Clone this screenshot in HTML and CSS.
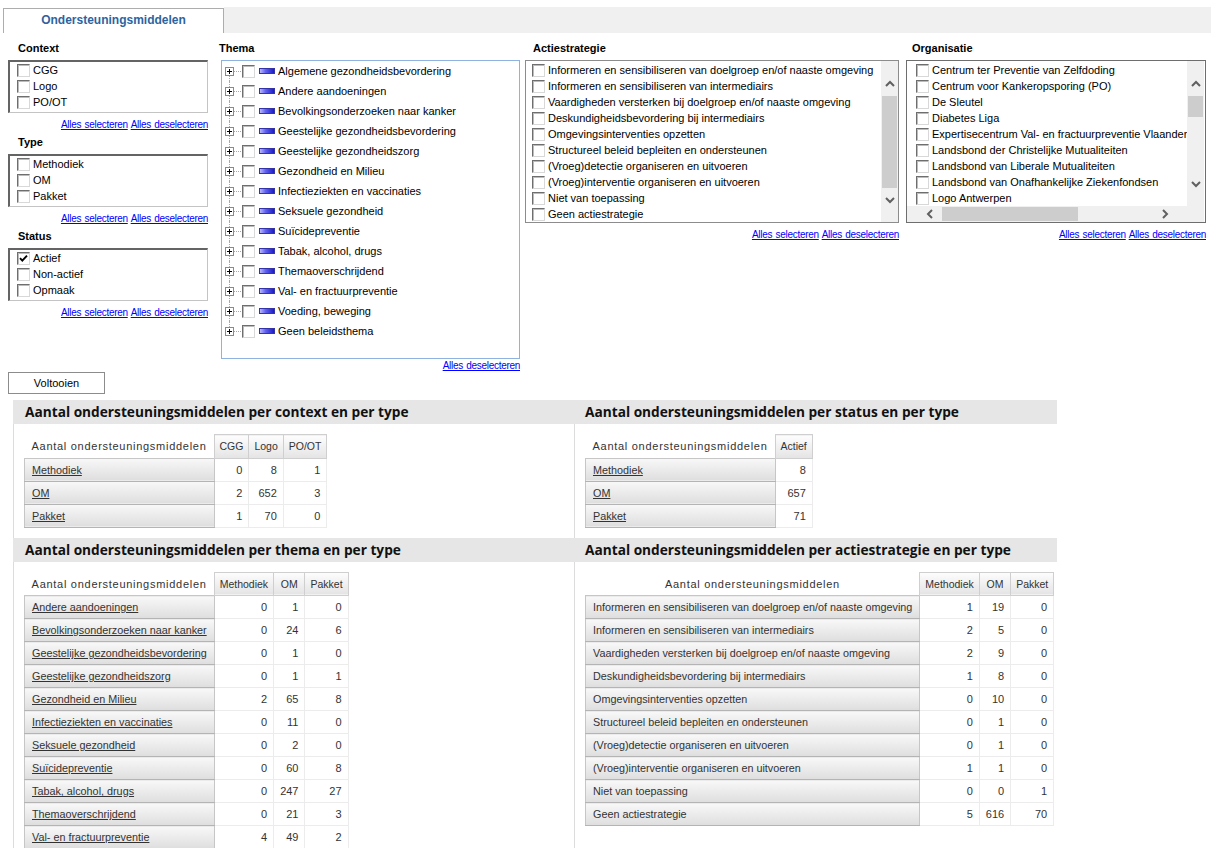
FILE: index.html
```html
<!DOCTYPE html>
<html lang="nl">
<head>
<meta charset="utf-8">
<title>Ondersteuningsmiddelen</title>
<link rel="stylesheet" href="styles.css">
</head>
<body>
<div class="tabbar">
  <div class="tab">Ondersteuningsmiddelen</div>
  <div class="tabfill"></div>
</div>

<div class="filters">
  <div class="col col-ctx">
    <div class="group">
      <div class="flabel">Context</div>
      <div class="lbox">
        <div class="opt"><span class="cb"></span>CGG</div>
        <div class="opt"><span class="cb"></span>Logo</div>
        <div class="opt"><span class="cb"></span>PO/OT</div>
      </div>
      <div class="links"><a href="#">Alles selecteren</a> <a href="#">Alles deselecteren</a></div>
    </div>
    <div class="group">
      <div class="flabel">Type</div>
      <div class="lbox">
        <div class="opt"><span class="cb"></span>Methodiek</div>
        <div class="opt"><span class="cb"></span>OM</div>
        <div class="opt"><span class="cb"></span>Pakket</div>
      </div>
      <div class="links"><a href="#">Alles selecteren</a> <a href="#">Alles deselecteren</a></div>
    </div>
    <div class="group">
      <div class="flabel">Status</div>
      <div class="lbox">
        <div class="opt"><span class="cb"><svg width="11" height="11" viewBox="0 0 11 11"><path d="M2 5.2 L4.3 7.6 L9 2.6" fill="none" stroke="#000" stroke-width="1.9"/></svg></span>Actief</div>
        <div class="opt"><span class="cb"></span>Non-actief</div>
        <div class="opt"><span class="cb"></span>Opmaak</div>
      </div>
      <div class="links"><a href="#">Alles selecteren</a> <a href="#">Alles deselecteren</a></div>
    </div>
  </div>

  <div class="col col-thema">
    <div class="flabel">Thema</div>
    <div class="tbox">
      <div class="trow"><span class="exp"><svg width="9" height="9" viewBox="0 0 9 9"><rect x="0.5" y="0.5" width="8" height="8" fill="#fff" stroke="#8a8a8a"/><path d="M2 4.5h5M4.5 2v5" stroke="#000"/></svg></span><span class="hline"></span><span class="cb"></span><span class="ticon"></span><span class="ttext">Algemene gezondheidsbevordering</span></div>
      <div class="trow"><span class="exp"><svg width="9" height="9" viewBox="0 0 9 9"><rect x="0.5" y="0.5" width="8" height="8" fill="#fff" stroke="#8a8a8a"/><path d="M2 4.5h5M4.5 2v5" stroke="#000"/></svg></span><span class="hline"></span><span class="cb"></span><span class="ticon"></span><span class="ttext">Andere aandoeningen</span></div>
      <div class="trow"><span class="exp"><svg width="9" height="9" viewBox="0 0 9 9"><rect x="0.5" y="0.5" width="8" height="8" fill="#fff" stroke="#8a8a8a"/><path d="M2 4.5h5M4.5 2v5" stroke="#000"/></svg></span><span class="hline"></span><span class="cb"></span><span class="ticon"></span><span class="ttext">Bevolkingsonderzoeken naar kanker</span></div>
      <div class="trow"><span class="exp"><svg width="9" height="9" viewBox="0 0 9 9"><rect x="0.5" y="0.5" width="8" height="8" fill="#fff" stroke="#8a8a8a"/><path d="M2 4.5h5M4.5 2v5" stroke="#000"/></svg></span><span class="hline"></span><span class="cb"></span><span class="ticon"></span><span class="ttext">Geestelijke gezondheidsbevordering</span></div>
      <div class="trow"><span class="exp"><svg width="9" height="9" viewBox="0 0 9 9"><rect x="0.5" y="0.5" width="8" height="8" fill="#fff" stroke="#8a8a8a"/><path d="M2 4.5h5M4.5 2v5" stroke="#000"/></svg></span><span class="hline"></span><span class="cb"></span><span class="ticon"></span><span class="ttext">Geestelijke gezondheidszorg</span></div>
      <div class="trow"><span class="exp"><svg width="9" height="9" viewBox="0 0 9 9"><rect x="0.5" y="0.5" width="8" height="8" fill="#fff" stroke="#8a8a8a"/><path d="M2 4.5h5M4.5 2v5" stroke="#000"/></svg></span><span class="hline"></span><span class="cb"></span><span class="ticon"></span><span class="ttext">Gezondheid en Milieu</span></div>
      <div class="trow"><span class="exp"><svg width="9" height="9" viewBox="0 0 9 9"><rect x="0.5" y="0.5" width="8" height="8" fill="#fff" stroke="#8a8a8a"/><path d="M2 4.5h5M4.5 2v5" stroke="#000"/></svg></span><span class="hline"></span><span class="cb"></span><span class="ticon"></span><span class="ttext">Infectieziekten en vaccinaties</span></div>
      <div class="trow"><span class="exp"><svg width="9" height="9" viewBox="0 0 9 9"><rect x="0.5" y="0.5" width="8" height="8" fill="#fff" stroke="#8a8a8a"/><path d="M2 4.5h5M4.5 2v5" stroke="#000"/></svg></span><span class="hline"></span><span class="cb"></span><span class="ticon"></span><span class="ttext">Seksuele gezondheid</span></div>
      <div class="trow"><span class="exp"><svg width="9" height="9" viewBox="0 0 9 9"><rect x="0.5" y="0.5" width="8" height="8" fill="#fff" stroke="#8a8a8a"/><path d="M2 4.5h5M4.5 2v5" stroke="#000"/></svg></span><span class="hline"></span><span class="cb"></span><span class="ticon"></span><span class="ttext">Suïcidepreventie</span></div>
      <div class="trow"><span class="exp"><svg width="9" height="9" viewBox="0 0 9 9"><rect x="0.5" y="0.5" width="8" height="8" fill="#fff" stroke="#8a8a8a"/><path d="M2 4.5h5M4.5 2v5" stroke="#000"/></svg></span><span class="hline"></span><span class="cb"></span><span class="ticon"></span><span class="ttext">Tabak, alcohol, drugs</span></div>
      <div class="trow"><span class="exp"><svg width="9" height="9" viewBox="0 0 9 9"><rect x="0.5" y="0.5" width="8" height="8" fill="#fff" stroke="#8a8a8a"/><path d="M2 4.5h5M4.5 2v5" stroke="#000"/></svg></span><span class="hline"></span><span class="cb"></span><span class="ticon"></span><span class="ttext">Themaoverschrijdend</span></div>
      <div class="trow"><span class="exp"><svg width="9" height="9" viewBox="0 0 9 9"><rect x="0.5" y="0.5" width="8" height="8" fill="#fff" stroke="#8a8a8a"/><path d="M2 4.5h5M4.5 2v5" stroke="#000"/></svg></span><span class="hline"></span><span class="cb"></span><span class="ticon"></span><span class="ttext">Val- en fractuurpreventie</span></div>
      <div class="trow"><span class="exp"><svg width="9" height="9" viewBox="0 0 9 9"><rect x="0.5" y="0.5" width="8" height="8" fill="#fff" stroke="#8a8a8a"/><path d="M2 4.5h5M4.5 2v5" stroke="#000"/></svg></span><span class="hline"></span><span class="cb"></span><span class="ticon"></span><span class="ttext">Voeding, beweging</span></div>
      <div class="trow"><span class="exp"><svg width="9" height="9" viewBox="0 0 9 9"><rect x="0.5" y="0.5" width="8" height="8" fill="#fff" stroke="#8a8a8a"/><path d="M2 4.5h5M4.5 2v5" stroke="#000"/></svg></span><span class="hline"></span><span class="cb"></span><span class="ticon"></span><span class="ttext">Geen beleidsthema</span></div>
    </div>
    <div class="links links-thema"><a href="#">Alles deselecteren</a></div>
  </div>

  <div class="col col-acti">
    <div class="flabel">Actiestrategie</div>
    <div class="sbox abox">
      <div class="slist">
        <div class="opt"><span class="cb"></span>Informeren en sensibiliseren van doelgroep en/of naaste omgeving</div>
        <div class="opt"><span class="cb"></span>Informeren en sensibiliseren van intermediairs</div>
        <div class="opt"><span class="cb"></span>Vaardigheden versterken bij doelgroep en/of naaste omgeving</div>
        <div class="opt"><span class="cb"></span>Deskundigheidsbevordering bij intermediairs</div>
        <div class="opt"><span class="cb"></span>Omgevingsinterventies opzetten</div>
        <div class="opt"><span class="cb"></span>Structureel beleid bepleiten en ondersteunen</div>
        <div class="opt"><span class="cb"></span>(Vroeg)detectie organiseren en uitvoeren</div>
        <div class="opt"><span class="cb"></span>(Vroeg)interventie organiseren en uitvoeren</div>
        <div class="opt"><span class="cb"></span>Niet van toepassing</div>
        <div class="opt"><span class="cb"></span>Geen actiestrategie</div>
      </div>
      <div class="vscroll">
        <div class="sbtn sbtn-up"><svg width="10" height="7" viewBox="0 0 10 7"><path d="M1 6 L5 2 L9 6" fill="none" stroke="#606060" stroke-width="2"/></svg></div>
        <div class="vthumb vthumb-acti"></div>
        <div class="sbtn sbtn-down"><svg width="10" height="7" viewBox="0 0 10 7"><path d="M1 1 L5 5 L9 1" fill="none" stroke="#606060" stroke-width="2"/></svg></div>
      </div>
    </div>
    <div class="links links-box"><a href="#">Alles selecteren</a> <a href="#">Alles deselecteren</a></div>
  </div>

  <div class="col col-org">
    <div class="flabel">Organisatie</div>
    <div class="obox">
      <div class="slist olist">
        <div class="opt"><span class="cb"></span>Centrum ter Preventie van Zelfdoding</div>
        <div class="opt"><span class="cb"></span>Centrum voor Kankeropsporing (PO)</div>
        <div class="opt"><span class="cb"></span>De Sleutel</div>
        <div class="opt"><span class="cb"></span>Diabetes Liga</div>
        <div class="opt"><span class="cb"></span>Expertisecentrum Val- en fractuurpreventie Vlaanderen</div>
        <div class="opt"><span class="cb"></span>Landsbond der Christelijke Mutualiteiten</div>
        <div class="opt"><span class="cb"></span>Landsbond van Liberale Mutualiteiten</div>
        <div class="opt"><span class="cb"></span>Landsbond van Onafhankelijke Ziekenfondsen</div>
        <div class="opt"><span class="cb"></span>Logo Antwerpen</div>
      </div>
      <div class="vscroll">
        <div class="sbtn sbtn-up"><svg width="10" height="7" viewBox="0 0 10 7"><path d="M1 6 L5 2 L9 6" fill="none" stroke="#606060" stroke-width="2"/></svg></div>
        <div class="vthumb vthumb-org"></div>
        <div class="vtrack"></div>
        <div class="sbtn sbtn-down"><svg width="10" height="7" viewBox="0 0 10 7"><path d="M1 1 L5 5 L9 1" fill="none" stroke="#606060" stroke-width="2"/></svg></div>
      </div>
      <div class="hscroll">
        <div class="hbtn hbtn-left"><svg width="7" height="10" viewBox="0 0 7 10"><path d="M6 1 L2 5 L6 9" fill="none" stroke="#606060" stroke-width="2"/></svg></div>
        <div class="hthumb"></div>
        <div class="htrack"></div>
        <div class="hbtn hbtn-right"><svg width="7" height="10" viewBox="0 0 7 10"><path d="M1 1 L5 5 L1 9" fill="none" stroke="#606060" stroke-width="2"/></svg></div>
      </div>
      <div class="corner"></div>
    </div>
    <div class="links links-box"><a href="#">Alles selecteren</a> <a href="#">Alles deselecteren</a></div>
  </div>
</div>

<button class="btn" type="button">Voltooien</button>

<div class="report">
  <section class="panel">
    <h2 class="panel-head">Aantal ondersteuningsmiddelen per context en per type</h2>
    <div class="panel-body">
      <table class="rtable">
        <tr><th class="corner">Aantal ondersteuningsmiddelen</th><th class="colh">CGG</th><th class="colh">Logo</th><th class="colh">PO/OT</th></tr>
        <tr><td class="lbl"><a href="#">Methodiek</a></td><td class="num">0</td><td class="num">8</td><td class="num">1</td></tr>
        <tr><td class="lbl"><a href="#">OM</a></td><td class="num">2</td><td class="num">652</td><td class="num">3</td></tr>
        <tr><td class="lbl"><a href="#">Pakket</a></td><td class="num">1</td><td class="num">70</td><td class="num">0</td></tr>
      </table>
    </div>
  </section>
  <section class="panel panel-right">
    <h2 class="panel-head">Aantal ondersteuningsmiddelen per status en per type</h2>
    <div class="panel-body">
      <table class="rtable">
        <tr><th class="corner">Aantal ondersteuningsmiddelen</th><th class="colh">Actief</th></tr>
        <tr><td class="lbl"><a href="#">Methodiek</a></td><td class="num">8</td></tr>
        <tr><td class="lbl"><a href="#">OM</a></td><td class="num">657</td></tr>
        <tr><td class="lbl"><a href="#">Pakket</a></td><td class="num">71</td></tr>
      </table>
    </div>
  </section>
  <section class="panel">
    <h2 class="panel-head">Aantal ondersteuningsmiddelen per thema en per type</h2>
    <div class="panel-body">
      <table class="rtable">
        <tr><th class="corner">Aantal ondersteuningsmiddelen</th><th class="colh">Methodiek</th><th class="colh">OM</th><th class="colh">Pakket</th></tr>
        <tr><td class="lbl"><a href="#">Andere aandoeningen</a></td><td class="num">0</td><td class="num">1</td><td class="num">0</td></tr>
        <tr><td class="lbl"><a href="#">Bevolkingsonderzoeken naar kanker</a></td><td class="num">0</td><td class="num">24</td><td class="num">6</td></tr>
        <tr><td class="lbl"><a href="#">Geestelijke gezondheidsbevordering</a></td><td class="num">0</td><td class="num">1</td><td class="num">0</td></tr>
        <tr><td class="lbl"><a href="#">Geestelijke gezondheidszorg</a></td><td class="num">0</td><td class="num">1</td><td class="num">1</td></tr>
        <tr><td class="lbl"><a href="#">Gezondheid en Milieu</a></td><td class="num">2</td><td class="num">65</td><td class="num">8</td></tr>
        <tr><td class="lbl"><a href="#">Infectieziekten en vaccinaties</a></td><td class="num">0</td><td class="num">11</td><td class="num">0</td></tr>
        <tr><td class="lbl"><a href="#">Seksuele gezondheid</a></td><td class="num">0</td><td class="num">2</td><td class="num">0</td></tr>
        <tr><td class="lbl"><a href="#">Suïcidepreventie</a></td><td class="num">0</td><td class="num">60</td><td class="num">8</td></tr>
        <tr><td class="lbl"><a href="#">Tabak, alcohol, drugs</a></td><td class="num">0</td><td class="num">247</td><td class="num">27</td></tr>
        <tr><td class="lbl"><a href="#">Themaoverschrijdend</a></td><td class="num">0</td><td class="num">21</td><td class="num">3</td></tr>
        <tr><td class="lbl"><a href="#">Val- en fractuurpreventie</a></td><td class="num">4</td><td class="num">49</td><td class="num">2</td></tr>
      </table>
    </div>
  </section>
  <section class="panel panel-right">
    <h2 class="panel-head">Aantal ondersteuningsmiddelen per actiestrategie en per type</h2>
    <div class="panel-body">
      <table class="rtable">
        <tr><th class="corner">Aantal ondersteuningsmiddelen</th><th class="colh">Methodiek</th><th class="colh">OM</th><th class="colh">Pakket</th></tr>
        <tr><td class="lbl">Informeren en sensibiliseren van doelgroep en/of naaste omgeving</td><td class="num">1</td><td class="num">19</td><td class="num">0</td></tr>
        <tr><td class="lbl">Informeren en sensibiliseren van intermediairs</td><td class="num">2</td><td class="num">5</td><td class="num">0</td></tr>
        <tr><td class="lbl">Vaardigheden versterken bij doelgroep en/of naaste omgeving</td><td class="num">2</td><td class="num">9</td><td class="num">0</td></tr>
        <tr><td class="lbl">Deskundigheidsbevordering bij intermediairs</td><td class="num">1</td><td class="num">8</td><td class="num">0</td></tr>
        <tr><td class="lbl">Omgevingsinterventies opzetten</td><td class="num">0</td><td class="num">10</td><td class="num">0</td></tr>
        <tr><td class="lbl">Structureel beleid bepleiten en ondersteunen</td><td class="num">0</td><td class="num">1</td><td class="num">0</td></tr>
        <tr><td class="lbl">(Vroeg)detectie organiseren en uitvoeren</td><td class="num">0</td><td class="num">1</td><td class="num">0</td></tr>
        <tr><td class="lbl">(Vroeg)interventie organiseren en uitvoeren</td><td class="num">1</td><td class="num">1</td><td class="num">0</td></tr>
        <tr><td class="lbl">Niet van toepassing</td><td class="num">0</td><td class="num">0</td><td class="num">1</td></tr>
        <tr><td class="lbl">Geen actiestrategie</td><td class="num">5</td><td class="num">616</td><td class="num">70</td></tr>
      </table>
    </div>
  </section>
</div>
</body>
</html>
```

FILE: styles.css
```css
html { overflow: hidden; }
body {
  margin: 0;
  background: #fff;
  font-family: "Liberation Sans", Arial, sans-serif;
  font-size: 11px;
  color: #000;
}

/* tab strip */
.tabbar {
  display: flex;
  height: 26px;
  margin-top: 7px;
  padding-left: 3px;
}
.tab {
  width: 221px;
  height: 25px;
  margin-top: 1px;
  box-sizing: border-box;
  border: 1px solid #adadad;
  border-bottom: none;
  background: #fff;
  text-align: center;
  font-weight: bold;
  font-size: 12px;
  line-height: 23px;
  color: #2c63a1;
}
.tabfill {
  flex: 1;
  background: #f0f0f0;
}

/* filters */
.filters {
  display: flex;
  align-items: flex-start;
  padding-top: 8px;
}
.col-ctx { margin-left: 8px; width: 200px; }
.col-thema { margin-left: 11px; width: 301px; }
.col-acti { margin-left: 5px; width: 374px; }
.col-org { margin-left: 7px; width: 300px; }

.flabel {
  font-weight: bold;
  font-size: 11px;
  line-height: 14px;
  height: 14px;
  margin-bottom: 5px;
}
.col-ctx .flabel { padding-left: 10px; }
.col-acti .flabel { padding-left: 8px; }
.col-org .flabel { padding-left: 6px; }

.group { margin-bottom: 4px; }

.lbox {
  border-style: solid;
  border-width: 2px 1px 1px 2px;
  border-color: #646464 #c4c4c4 #c4c4c4 #646464;
  padding: 0 0 2px 7px;
}

.opt {
  display: flex;
  align-items: center;
  height: 16px;
  font-size: 11px;
  line-height: 16px;
  white-space: nowrap;
}
.cb {
  flex: none;
  width: 13px;
  height: 13px;
  box-sizing: border-box;
  border: 1px solid;
  border-color: #6e6e6e #d8d8d8 #d8d8d8 #6e6e6e;
  box-shadow: inset 1px 1px 0 #bcbcbc;
  background: #fff;
  margin-right: 3px;
  display: flex;
  align-items: center;
  justify-content: center;
}
.cb svg { display: block; }

.links {
  text-align: right;
  font-size: 10px;
  line-height: 12px;
  letter-spacing: -0.3px;
  word-spacing: 1px;
  margin-top: 6px;
  white-space: nowrap;
}
.links a { color: #0000ff; text-decoration: underline; }
.links-thema { margin-top: 1px; }
.links-box { margin-top: 6px; }

/* thema tree */
.tbox {
  margin-left: 2px;
  width: 299px;
  height: 299px;
  box-sizing: border-box;
  border: 1px solid #8fb3e0;
  padding-left: 3px;
}
.trow {
  position: relative;
  display: flex;
  align-items: center;
  height: 20px;
}
.trow::before {
  content: "";
  position: absolute;
  left: 4px;
  top: 0;
  bottom: 0;
  border-left: 1px dotted #a8a8a8;
}
.trow:first-child::before { top: 10px; }
.trow:last-child::before { bottom: 10px; }
.exp {
  position: relative;
  z-index: 1;
  width: 9px;
  height: 9px;
  flex: none;
}
.exp svg { display: block; }
.hline {
  width: 7px;
  margin: 0 1px 0 0;
  border-top: 1px dotted #a8a8a8;
  flex: none;
}
.trow .cb { margin-right: 4px; }
.ticon {
  flex: none;
  width: 16px;
  height: 6px;
  box-sizing: border-box;
  border: 1px solid #3434a8;
  background: linear-gradient(to right, #b8b8ff 0%, #6060f0 40%, #1c1cc8 100%);
  margin-right: 3px;
}
.ttext { white-space: nowrap; }

/* scrolling list boxes */
.sbox {
  display: flex;
  height: 163px;
  box-sizing: border-box;
  border: 1px solid #8c8c8c;
}
.slist {
  flex: 1;
  overflow: hidden;
  padding: 1px 0 0 6px;
}
.vscroll {
  width: 17px;
  flex: none;
  background: #f0f0f0;
  display: flex;
  flex-direction: column;
}
.sbtn {
  flex: none;
  height: 35px;
  display: flex;
  justify-content: center;
}
.sbtn svg { display: block; }
.sbtn-up { align-items: flex-end; padding-bottom: 9px; box-sizing: border-box; }
.sbtn-down { align-items: flex-start; padding-top: 9px; box-sizing: border-box; }
.vthumb {
  background: #cdcdcd;
  margin: 0 1px;
}
.vthumb-acti { flex: 1; }
.vthumb-org { height: 21px; flex: none; }
.vtrack { flex: 1; }

.obox {
  display: grid;
  grid-template-columns: 280px 17px;
  grid-template-rows: 145px 16px;
  height: 163px;
  box-sizing: border-box;
  border: 1px solid #6e6e6e;
}
.olist { padding: 1px 0 0 9px; }
.vscroll .sbtn-down { height: 34px; }
.hscroll {
  display: flex;
  background: #f0f0f0;
}
.hbtn {
  flex: none;
  width: 35px;
  display: flex;
  align-items: center;
  box-sizing: border-box;
}
.hbtn svg { display: block; }
.hbtn-left { justify-content: flex-end; padding-right: 9px; }
.hbtn-right { justify-content: flex-start; padding-left: 9px; width: 34px; }
.hthumb {
  width: 136px;
  background: #cdcdcd;
  margin: 1px 0;
}
.htrack { flex: 1; }
.corner { background: #f0f0f0; }

/* button */
.btn {
  display: block;
  margin: 0 0 0 8px;
  width: 97px;
  height: 22px;
  padding: 0;
  border: 1px solid #8c8c8c;
  background: #fff;
  font-family: "Liberation Sans", Arial, sans-serif;
  font-size: 11px;
  color: #000;
}

/* report panels */
.report {
  display: grid;
  grid-template-columns: 561px 483px;
  margin: 6px 0 0 13px;
}
.panel {
  display: flex;
  flex-direction: column;
}
.panel-head {
  margin: 0;
  height: 24px;
  background: #e6e6e6;
  font-family: "Open Sans", sans-serif;
  font-weight: bold;
  font-size: 13.7px;
  line-height: 24px;
  padding-left: 12px;
  color: #111;
  white-space: nowrap;
}
.panel-right .panel-head { padding-left: 11px; }
.panel-body {
  flex: 1;
  border-left: 1px solid #dcdcdc;
  padding: 10px 10px 10px;
}

.rtable {
  border-collapse: collapse;
  font-size: 11px;
  color: #333;
}
.rtable th { font-weight: normal; }
.rtable .corner {
  background: none;
  border: none;
  height: 23px;
  padding: 0 7px;
  text-align: center;
  letter-spacing: 0.72px;
  white-space: nowrap;
}
.rtable .colh {
  height: 22px;
  padding: 0 5px;
  font-size: 10.5px;
  border: 1px solid #cfcfcf;
  background: linear-gradient(#fdfdfd, #e4e4e4);
  white-space: nowrap;
}
.rtable .lbl {
  height: 22px;
  padding: 0 7px;
  font-size: 10.8px;
  text-align: left;
  border: 1px solid #c6c6c6;
  border-bottom-color: #b4b4b4;
  background: linear-gradient(#f8f8f8, #dedede);
  white-space: nowrap;
}
.rtable .lbl a { color: #333; text-decoration: underline; }
.rtable .num {
  height: 22px;
  padding: 0 6px;
  text-align: right;
  border: 1px solid #ececec;
  background: #fff;
}
```
